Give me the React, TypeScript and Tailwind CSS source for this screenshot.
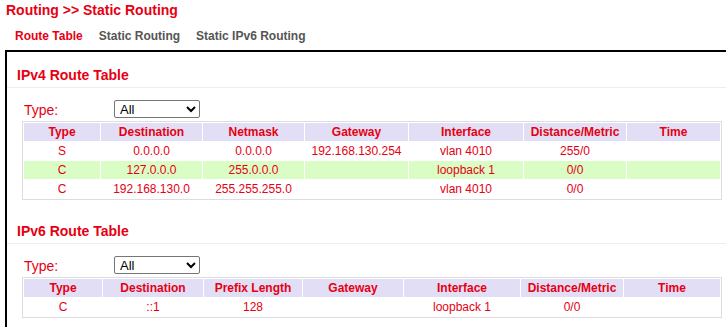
import { useState } from "react";

const IPV4_COLS = [76, 101, 101, 103, 114, 102, 93];
const IPV6_COLS = [78, 100, 98, 100, 116, 102, 96];

const IPV4_HEAD = ["Type", "Destination", "Netmask", "Gateway", "Interface", "Distance/Metric", "Time"];
const IPV6_HEAD = ["Type", "Destination", "Prefix Length", "Gateway", "Interface", "Distance/Metric", "Time"];

const IPV4_ROWS = [
  ["S", "0.0.0.0", "0.0.0.0", "192.168.130.254", "vlan 4010", "255/0", ""],
  ["C", "127.0.0.0", "255.0.0.0", "", "loopback 1", "0/0", ""],
  ["C", "192.168.130.0", "255.255.255.0", "", "vlan 4010", "0/0", ""],
];
const IPV6_ROWS = [["C", "::1", "128", "", "loopback 1", "0/0", ""]];

function RouteTable({ title, cols, head, rows }: { title: string; cols: number[]; head: string[]; rows: string[][] }) {
  const [type, setType] = useState("All");
  return (
    <div>
      <div className="text-[14px] font-bold leading-[16px] text-[#e60012] pl-[10px] pb-[4px] border-b border-[#eeeeee]">
        {title}
      </div>
      <div className="mt-[12px] h-[18px] flex items-center pl-[17px]">
        <span className="w-[90px] text-[14px] leading-[16px] pt-[2px] text-[#e60012]">Type:</span>
        <select
          value={type}
          onChange={(e) => setType(e.target.value)}
          className="w-[86px] h-[18px] border border-[#767676] rounded-[2px] bg-white text-[13px] leading-[16px] text-black pl-[1px]"
        >
          <option>All</option>
          <option>Static</option>
          <option>Connected</option>
        </select>
      </div>
      {/* route list */}
      <table className="mt-[3px] ml-[15px] w-[700px] table-fixed border-separate border-spacing-px border border-[#dddddd] text-[12px] leading-[14px] text-[#e60012]">
        <colgroup>
          {cols.map((w, i) => (
            <col key={i} style={{ width: w }} />
          ))}
        </colgroup>
        <thead>
          <tr>
            {head.map((h) => (
              <th key={h} className="h-[18px] p-0 bg-[#e1def5] font-bold text-center">
                {h}
              </th>
            ))}
          </tr>
        </thead>
        <tbody>
          {rows.map((r, i) => (
            <tr key={i} className={i % 2 === 1 ? "bg-[#dafdc6]" : "bg-white"}>
              {r.map((c, j) => (
                <td key={j} className="h-[18px] p-0 text-center">
                  {c}
                </td>
              ))}
            </tr>
          ))}
        </tbody>
      </table>
    </div>
  );
}

export default function App() {
  const tabs = ["Route Table", "Static Routing", "Static IPv6 Routing"];
  return (
    <div className="w-[726px] h-[327px] overflow-hidden bg-white" style={{ fontFamily: '"Liberation Sans", Arial, sans-serif' }}>
      <div className="pt-[2px] pl-[6px] text-[14px] font-bold leading-[16px] text-[#e60012]">
        Routing &gt;&gt; Static Routing
      </div>
      <div className="mt-[11px] pl-[15px] flex gap-[16px] text-[12px] font-bold leading-[14px]">
        {tabs.map((t, i) => (
          <span key={t} className={i === 0 ? "text-[#e60012]" : "text-[#555555]"}>
            {t}
          </span>
        ))}
      </div>
      <div className="mt-[7px] ml-[5px] w-[760px] h-[400px] border-l-2 border-t-2 border-black pt-[15px]">
        <RouteTable title="IPv4 Route Table" cols={IPV4_COLS} head={IPV4_HEAD} rows={IPV4_ROWS} />
        <div className="mt-[23px]">
          <RouteTable title="IPv6 Route Table" cols={IPV6_COLS} head={IPV6_HEAD} rows={IPV6_ROWS} />
        </div>
      </div>
    </div>
  );
}
